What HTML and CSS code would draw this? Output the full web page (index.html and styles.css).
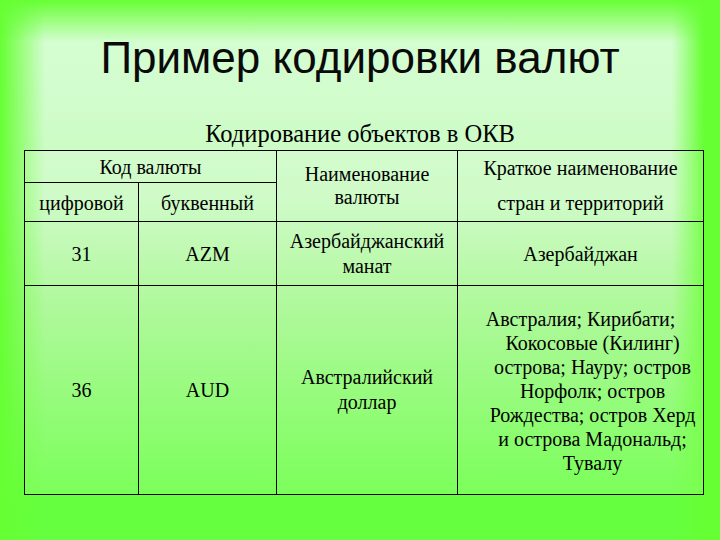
FILE: index.html
```html
<!DOCTYPE html>
<html>
<head>
<meta charset="utf-8">
<title>Пример кодировки валют</title>
<link rel="stylesheet" href="styles.css">
</head>
<body>
<div class="slide">
  <h1 class="title">Пример кодировки валют</h1>
  <p class="subtitle">Кодирование объектов в ОКВ</p>
  <table class="codes">
    <colgroup>
      <col class="c1"><col class="c2"><col class="c3"><col class="c4">
    </colgroup>
    <tr class="r-top">
      <td colspan="2">Код валюты</td>
      <td rowspan="2" class="name-head">Наименование<br>валюты</td>
      <td rowspan="2" class="short-head"><div>Краткое наименование</div><div>стран и территорий</div></td>
    </tr>
    <tr class="r-sub">
      <td>цифровой</td>
      <td>буквенный</td>
    </tr>
    <tr class="r-1">
      <td>31</td>
      <td>AZM</td>
      <td class="lines">Азербайджанский<br>манат</td>
      <td>Азербайджан</td>
    </tr>
    <tr class="r-2">
      <td>36</td>
      <td>AUD</td>
      <td class="lines">Австралийский<br>доллар</td>
      <td class="countries"><div class="first">Австралия; Кирибати;</div><div>Кокосовые (Килинг)</div><div>острова; Науру; остров</div><div>Норфолк; остров</div><div>Рождества; остров Херд</div><div>и острова Мадональд;</div><div>Тувалу</div></td>
    </tr>
  </table>
</div>
</body>
</html>
```

FILE: styles.css
```css
html, body {
  margin: 0;
  padding: 0;
}
body {
  width: 720px;
  height: 540px;
  overflow: hidden;
  font-family: "Liberation Serif", serif;
  color: #000;
  background:
    linear-gradient(to right, #66ff33 0px, rgba(102,255,51,0) 45px, rgba(102,255,51,0) 672px, #66ff33 704px),
    linear-gradient(to bottom, #66ff33 0px, rgba(102,255,51,0) 42px),
    linear-gradient(to bottom, #d4fdd0 60px, #c8fbc0 200px, #a6f890 300px, #66ff40 500px);
}
.slide {
  padding-top: 32px;
}
.title {
  margin: 0;
  font-family: "Liberation Sans", Arial, sans-serif;
  font-weight: normal;
  font-size: 44px;
  line-height: 52px;
  text-align: center;
  color: #0a0a0a;
}
.subtitle {
  margin: 38px 0 4px;
  font-family: "Liberation Serif", serif;
  font-size: 24.5px;
  line-height: 24px;
  text-align: center;
}
.codes {
  margin-left: 24px;
  border-collapse: collapse;
  table-layout: fixed;
  width: 679px;
  font-family: "Liberation Serif", serif;
  font-size: 20px;
  background: rgba(255,255,255,0.13);
}
.c1 { width: 114px; }
.c2 { width: 138px; }
.c3 { width: 181px; }
.c4 { width: 246px; }
.codes td {
  border: 1px solid #000;
  padding: 0;
  text-align: center;
  vertical-align: middle;
  line-height: 24px;
}
.codes .r-top td { height: 31px; }
.codes .r-sub td { height: 35px; padding-top: 2px; }
.codes .r-1 td { height: 63px; }
.codes .r-2 td { height: 206px; }
.codes td.name-head { line-height: 23px; }
.short-head div { line-height: 35px; }
.codes td.lines { line-height: 25px; }
.codes td.countries { padding: 2px 0 0 24px; }
.countries .first { margin-left: -24px; }
```
